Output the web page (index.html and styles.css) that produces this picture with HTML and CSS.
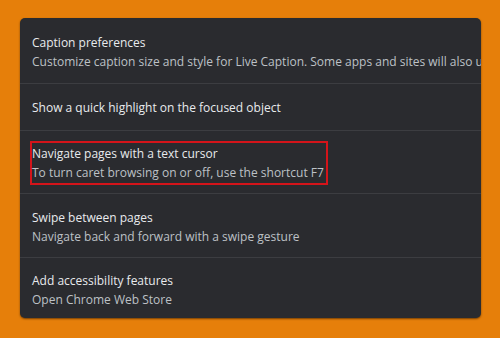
FILE: index.html
```html
<!DOCTYPE html>
<html lang="en">
<head>
    <meta charset="UTF-8">
    <title>Accessibility settings</title>
    <link rel="stylesheet" href="styles.css">
</head>
<body>
    <div class="panel">
        <div class="row row-first">
            <div class="title">Caption preferences</div>
            <div class="sub">Customize caption size and style for Live Caption. Some apps and sites will also use this setting.</div>
        </div>
        <div class="row row-single">
            <div class="title">Show a quick highlight on the focused object</div>
        </div>
        <div class="row row-mark">
            <div class="mark">
                <div class="title">Navigate pages with a text cursor</div>
                <div class="sub">To turn caret browsing on or off, use the shortcut F7</div>
            </div>
        </div>
        <div class="row">
            <div class="title">Swipe between pages</div>
            <div class="sub">Navigate back and forward with a swipe gesture</div>
        </div>
        <div class="row row-last">
            <div class="title">Add accessibility features</div>
            <div class="sub">Open Chrome Web Store</div>
        </div>
    </div>
</body>
</html>
```

FILE: styles.css
```css
html, body {
    margin: 0;
    height: 100%;
}
body {
    background-color: #e67f0a;
    font-family: "Open Sans", "Noto Sans", sans-serif;
    font-size: 12px;
    padding: 18px 19px 0 20px;
    box-sizing: border-box;
    overflow: hidden;
}
.panel {
    background-color: #2a2b2f;
    border-radius: 5px;
    height: 300px;
    overflow: hidden;
    box-shadow: 0 1px 2px rgba(40, 20, 0, 0.6);
}
.row {
    height: 64px;
    padding-left: 12px;
    padding-top: 3px;
    display: flex;
    flex-direction: column;
    justify-content: center;
    border-top: 1px solid #3c3d41;
    box-sizing: border-box;
    white-space: nowrap;
}
.row-first {
    border-top: none;
    height: 65px;
}
.row-single {
    height: 47px;
    padding-top: 1px;
}
.row-last {
    height: 61px;
}
.row-mark {
    padding-left: 10px;
    padding-top: 1px;
    height: 63px;
}
.title {
    color: #e8eaed;
    line-height: 19px;
}
.sub {
    color: #bdc1c6;
    line-height: 19px;
}
.mark {
    border: 2.5px solid #d4141a;
    width: 294px;
    padding: 1px 0 1px 0;
}
```
